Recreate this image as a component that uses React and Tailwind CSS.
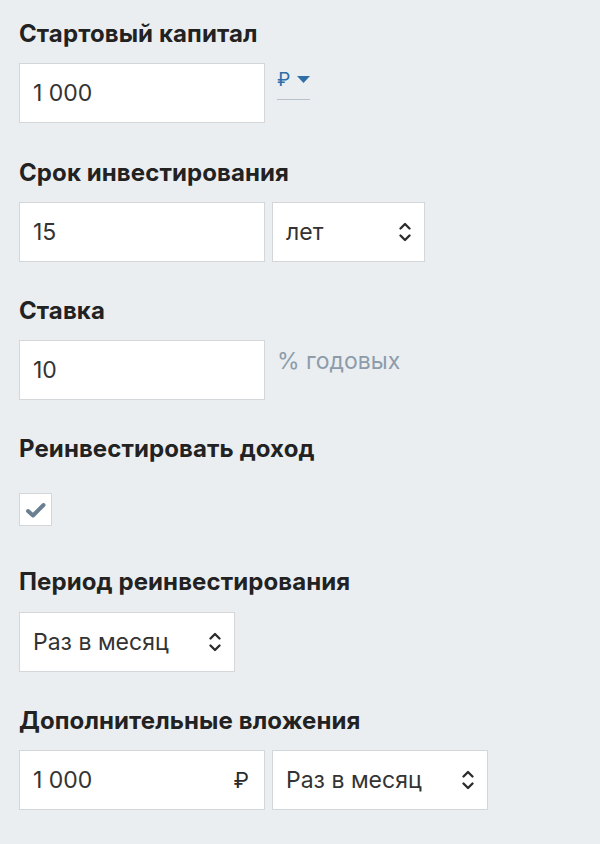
const Chevrons = () => (
  <svg width="12" height="20" viewBox="0 0 12 20" fill="none" stroke="#2b2b2b" strokeWidth="2.3" strokeLinecap="round" strokeLinejoin="round">
    <path d="M1.5 6.5 L6 2 L10.5 6.5" />
    <path d="M1.5 13.5 L6 18 L10.5 13.5" />
  </svg>
);

const Label = ({ children, className = '' }) => (
  <div className={`h-[30px] leading-[30px] text-[24px] font-bold tracking-[0.1px] text-[#222] ${className}`}>{children}</div>
);

const Box = ({ className = '', children }) => (
  <div className={`h-[60px] bg-white border border-[#d3d7da] flex items-center text-[23px] text-[#333] ${className}`}>
    {children}
  </div>
);

const Select = ({ value, className = '' }) => (
  <Box className={`pl-[13px] pr-[13px] justify-between ${className}`}>
    <span>{value}</span>
    <Chevrons />
  </Box>
);

export default function App() {
  return (
    <div className="min-h-[844px] bg-[#ebeef0] px-[19px] pt-[19px]" style={{ fontFamily: 'Inter, "Liberation Sans", sans-serif' }}>
      <Label>Стартовый капитал</Label>
      <div className="mt-[14px] flex items-start gap-[12px]">
        <Box className="w-[246px] pl-[13px]">1 000</Box>
        <div className="pt-[7px]">
          <div className="flex items-center gap-[7px] border-b border-[#b9c2ca] pb-[10px] text-[19px] text-[#2f6ea6]">
            <span className="leading-none">₽</span>
            <svg width="13" height="8" viewBox="0 0 13 8"><path d="M0 0 H13 L6.5 7 Z" fill="#2f6ea6" /></svg>
          </div>
        </div>
      </div>

      <Label className="mt-[35px]">Срок инвестирования</Label>
      <div className="mt-[14px] flex gap-[7px]">
        <Box className="w-[246px] pl-[13px]">15</Box>
        <Select value="лет" className="w-[153px]" />
      </div>

      <Label className="mt-[34px]">Ставка</Label>
      <div className="mt-[14px] flex items-start gap-[12px]">
        <Box className="w-[246px] pl-[13px]">10</Box>
        <span className="pt-[4px] text-[23px] text-[#8c9cab]">% годовых</span>
      </div>

      <Label className="mt-[34px]">Реинвестировать доход</Label>
      <div className="mt-[29px] w-[33px] h-[33px] bg-white border border-[#d3d7da] flex items-center justify-center">
        <svg width="22" height="18" viewBox="0 0 22 18">
          <path d="M3 10 L8 14.5 L18.5 4" fill="none" stroke="#6a7f92" strokeWidth="4" strokeLinecap="round" strokeLinejoin="round" />
        </svg>
      </div>

      <Label className="mt-[41px]">Период реинвестирования</Label>
      <div className="mt-[15px] flex">
        <Select value="Раз в месяц" className="w-[216px]" />
      </div>

      <Label className="mt-[34px]">Дополнительные вложения</Label>
      <div className="mt-[14px] flex gap-[7px]">
        <Box className="w-[246px] pl-[13px] pr-[15px] justify-between">
          <span>1 000</span>
          <span className="text-[22px] text-[#2b2b2b]">₽</span>
        </Box>
        <Select value="Раз в месяц" className="w-[216px]" />
      </div>
    </div>
  );
}
